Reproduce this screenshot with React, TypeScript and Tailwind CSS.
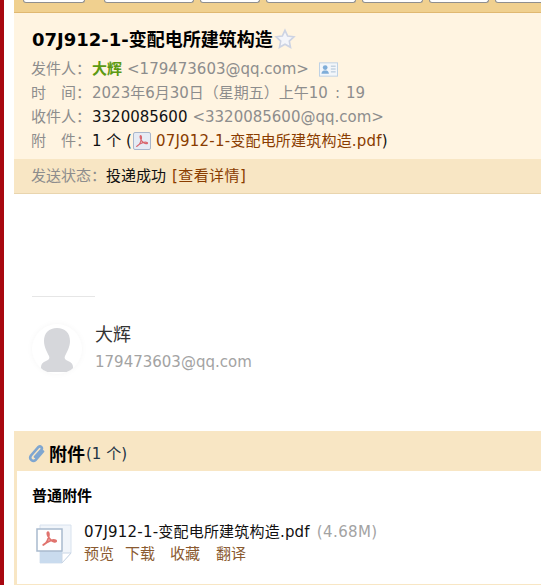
import React from 'react';

const FONT = "font-['DejaVu_Sans','Noto_Sans_CJK_SC',sans-serif]";

const PdfMark: React.FC<{ className?: string }> = ({ className }) => (
  <svg viewBox="0 0 24 24" fill="none" className={className}>
    <path d="M4 20c3-1 6-6 7-11 .4-2 .2-5-1-5s-1 3 0 5c1.500 3 5 6.500 8 7 2 .3 3-1 1.500-1.800-2.500-1.200-9 0-15.500 5.800z" stroke="#d9646c" strokeWidth="1.800" strokeLinejoin="round" />
  </svg>
);

const PdfSmall = () => (
  <span className="inline-flex w-[18px] h-[18px] ml-px bg-[#e6ebf4] border border-[#a9b6cc] rounded-[2px]">
    <PdfMark className="w-full h-full" />
  </span>
);

const PdfLarge = () => (
  <svg viewBox="0 0 36 40" className="w-9 h-10 shrink-0">
    <path d="M4 1h31v28l-9 10H4z" fill="#f1f5fa" stroke="#d8e2ee" />
    <path d="M4 27h22v12H4z" fill="#c9dbee" />
    <path d="M26 39l9-10h-9z" fill="#fff" stroke="#c9d6e6" />
    <rect x="1" y="5" width="25" height="22" fill="#fff" stroke="#a9bace" strokeWidth="1.500" />
    <g transform="translate(4 5) scale(.8)">
      <path d="M4 20c3-1 6-6 7-11 .4-2 .2-5-1-5s-1 3 0 5c1.500 3 5 6.500 8 7 2 .3 3-1 1.500-1.800-2.500-1.200-9 0-15.500 5.800z" fill="none" stroke="#e0736e" strokeWidth="2.200" strokeLinejoin="round" />
    </g>
  </svg>
);

const Row: React.FC<{ label: string; children: React.ReactNode }> = ({ label, children }) => (
  <div className="h-6 flex items-center whitespace-nowrap">
    <span className="text-[#8d8d8d]">{label}</span>
    {children}
  </div>
);

const Tab: React.FC<{ className: string }> = ({ className }) => (
  <div className={`h-[3px] shrink-0 bg-white border-b border-x border-[#8f8f8f] rounded-b-[3px] ${className}`} />
);

export default function App() {
  return (
    <div className={`w-[541px] h-[585px] overflow-hidden flex bg-white text-[15px] text-[#111] ${FONT}`}>
      <div className="w-1 shrink-0 bg-[#a80710]" />
      <div className="flex-1 min-w-0 pl-2.5">
        <div className="h-[13px] bg-[#f0d08f] border-b border-[#e0b871] pl-[9px] flex gap-[6px]">
          <Tab className="w-[62px]" />
          <Tab className="w-[90px] ml-[13px]" />
          <Tab className="w-[60px]" />
          <Tab className="w-[90px]" />
          <Tab className="w-[61px]" />
          <Tab className="w-[60px]" />
          <Tab className="w-[60px]" />
        </div>

        <div className="bg-[#fff4e1] pl-[17px] pt-[13px] h-[146px]">
          <div className="h-[26px] pl-px flex items-center text-[18px] font-bold text-black whitespace-nowrap">
            07J912-1-变配电所建筑构造
            <svg viewBox="0 0 24 24" className="w-[22px] h-[22px] ml-px" fill="#f4f5fa" stroke="#cdd3e3" strokeWidth="1.800">
              <path d="M12 2.500l2.900 6.300 6.800.8-5 4.700 1.300 6.800-6-3.400-6 3.400 1.300-6.800-5-4.700 6.800-.8z" />
            </svg>
          </div>
          <div className="mt-[5px]">
            <Row label={'发件人\uFF1A'}>
              <span className="ml-px font-bold text-[#5c9a12]">大辉</span>
              <span className="ml-[5px] text-[#8d8d8d]">&lt;179473603@qq.com&gt;</span>
              <svg viewBox="0 0 20 15" className="ml-[10px] w-[19px] h-[15px]">
                <rect x=".5" y=".5" width="19" height="14" fill="#f3f6fa" stroke="#bcd0e4" />
                <circle cx="6.500" cy="5.500" r="2.500" fill="#7fadd8" />
                <path d="M2.500 12c.5-3 2-3.500 4-3.500s3.500.5 4 3.500z" fill="#7fadd8" />
                <path d="M12.500 4h5M12.500 7h5M12.500 10h5" stroke="#a9bfd4" />
              </svg>
            </Row>
            <Row label={'时\u3000间\uFF1A'}>
              <span className="ml-px text-[#8d8d8d]">
                {'2023年6月30日\uFF08星期五\uFF09上午10'}
                <span className="ml-[7px] mr-[6px]">:</span>
                19
              </span>
            </Row>
            <Row label={'收件人\uFF1A'}>
              <span className="ml-px">3320085600</span>
              <span className="ml-[5px] text-[#8d8d8d]">&lt;3320085600@qq.com&gt;</span>
            </Row>
            <Row label={'附\u3000件\uFF1A'}>
              <span className="ml-px">1 个 (</span>
              <PdfSmall />
              <span className="text-[#8a3c00] ml-[5px] tracking-[0.2px]">07J912-1-变配电所建筑构造.pdf</span>
              <span>)</span>
            </Row>
          </div>
        </div>

        <div className="h-[35px] bg-[#f8e6c4] border-b border-[#e9d5ae] pl-[17px] flex items-center whitespace-nowrap">
          <span className="text-[#8d8d8d]">{'发送状态\uFF1A'}</span>
          <span>投递成功</span>
          <span className="ml-[6px] text-[#8a3c00] tracking-[0.4px]">[查看详情]</span>
        </div>

        <div className="pl-[18px] pt-[102px]">
          <div className="w-[63px] border-t border-[#e6e6e6]" />
          <div className="mt-[26px] flex items-center gap-[13px]">
            <div className="w-[50px] h-[50px] pb-[2px] rounded-full bg-white shadow-[0_0_6px_rgba(0,0,0,.04)] overflow-hidden flex items-end justify-center shrink-0">
              <svg viewBox="0 0 32 44" className="w-8 h-11">
                <path d="M16 0c8 0 13 5 13 13 0 6-3 11-5 15-1 2 0 4 3 5 3 1 5 3 5 6v5H0v-5c0-3 2-5 5-6 3-1 4-3 3-5-2-4-5-9-5-15C3 5 8 0 16 0z" fill="#d6d7db" />
              </svg>
            </div>
            <div>
              <div className="text-[18px] leading-6 text-[#333]">大辉</div>
              <div className="mt-[3px] leading-6 text-[#a3a3a3]">179473603@qq.com</div>
            </div>
          </div>
        </div>

        <div className="mt-[57px] bg-[#f8e6c4] pl-[3px] pb-px h-[154px]">
          <div className="h-10 pl-[10px] pt-[6px] flex items-center whitespace-nowrap">
            <svg viewBox="0 0 18 20" className="w-[18px] h-5" fill="none" stroke="#7fa6d0" strokeWidth="2.600" strokeLinecap="round">
              <path d="M16 7.500l-7.500 8.500c-2.500 2.500-7-1-4.500-4.500l7.500-8.500c1.800-1.800 4.500.5 2.800 2.800l-6.300 7" />
            </svg>
            <span className="ml-[4px] text-[18px] font-bold text-black">附件</span>
            <span className="ml-px text-[#234]">(1 个)</span>
          </div>
          <div className="h-[113px] bg-white pl-[15px] pt-[15px]">
            <div className="leading-5 font-bold text-black">普通附件</div>
            <div className="mt-[15px] flex items-start pl-1">
              <div className="mt-[3px]"><PdfLarge /></div>
              <div className="ml-3">
                <div className="leading-[22px] whitespace-nowrap tracking-[0.2px]">
                  07J912-1-变配电所建筑构造.pdf <span className="ml-[2px] text-[#a3a3a3] tracking-[0.4px]">(4.68M)</span>
                </div>
                <div className="leading-[22px] text-[#8a5a30] flex">
                  <span>预览</span>
                  <span className="ml-[11px]">下载</span>
                  <span className="ml-[15px]">收藏</span>
                  <span className="ml-4">翻译</span>
                </div>
              </div>
            </div>
          </div>
        </div>
      </div>
    </div>
  );
}
